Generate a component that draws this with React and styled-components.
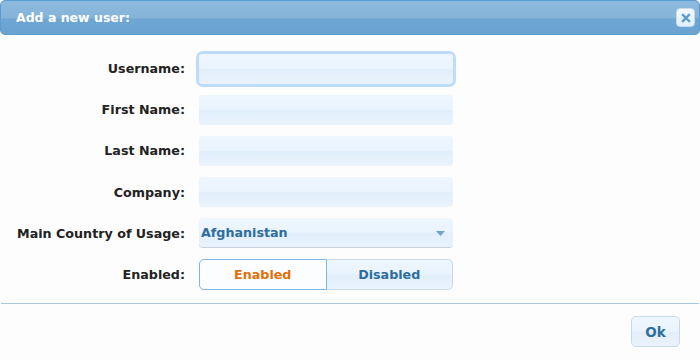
import React from 'react';
import styled, { createGlobalStyle, css } from 'styled-components';

const Global = createGlobalStyle`
  html, body {
    margin: 0;
    padding: 0;
    background: #fdfdfd;
  }
  body {
    font-family: "DejaVu Sans", Verdana, sans-serif;
  }
`;

const Dialog = styled.div`
  width: 700px;
  height: 360px;
  box-sizing: border-box;
  display: flex;
  flex-direction: column;
  background: #fdfdfd;
  overflow: hidden;
`;

const TitleBar = styled.div`
  height: 35px;
  box-sizing: border-box;
  display: flex;
  align-items: center;
  justify-content: space-between;
  padding: 0 4px 0 15px;
  border: 1px solid #5a9bd1;
  border-radius: 5px;
  background: linear-gradient(#8dbadd 0%, #85b4da 50%, #6fa6d2 55%, #6aa2d0 100%);
`;

const Title = styled.span`
  color: #fff;
  font-size: 12.5px;
  font-weight: bold;
`;

const CloseButton = styled.button`
  width: 19px;
  height: 19px;
  padding: 0;
  display: flex;
  align-items: center;
  justify-content: center;
  border: 1px solid #c5dbec;
  border-radius: 4px;
  background: linear-gradient(#f4f9fe, #dfeffc);
`;

const Form = styled.div`
  display: grid;
  grid-template-columns: 185px 254px;
  column-gap: 14px;
  row-gap: 11.2px;
  padding-top: 18.5px;
  align-items: center;
`;

const Label = styled.label`
  text-align: right;
  font-size: 12.7px;
  font-weight: bold;
  color: #222;
`;

const glass = css`
  background: linear-gradient(#eef6fe 0%, #eaf4fe 48%, #e1eefb 52%, #eaf3fd 100%);
`;

const Input = styled.input`
  height: 30px;
  box-sizing: border-box;
  border: none;
  border-radius: 4px;
  padding: 0 4px;
  outline: none;
  ${glass};
  ${p => p.$focused && css`
    box-shadow: 0 0 0 3px #bcdcfa;
  `}
`;

const Select = styled.div`
  position: relative;
  height: 30px;
  box-sizing: border-box;
  display: flex;
  align-items: center;
  padding: 0 2px;
  border-radius: 4px;
  border-bottom: 1px solid #c9cfd6;
  ${glass};
  color: #2e6e9e;
  font-size: 12.7px;
  font-weight: bold;
`;

const Arrow = styled.svg`
  position: absolute;
  right: 8px;
  top: 13px;
`;

const Segmented = styled.div`
  display: flex;
  height: 31px;
`;

const Segment = styled.button`
  flex: 1;
  box-sizing: border-box;
  font-family: inherit;
  font-size: 12.7px;
  font-weight: bold;
  cursor: pointer;
  border: 1px solid ${p => (p.$active ? '#79b7e7' : '#c5dbec')};
  color: ${p => (p.$active ? '#e17009' : '#2e6e9e')};
  background: ${p => (p.$active ? '#fbfdff' : 'linear-gradient(#eef6fe 0%, #eaf4fe 48%, #e1eefb 52%, #eaf3fd 100%)')};
  &:first-child {
    border-radius: 5px 0 0 5px;
  }
  &:last-child {
    border-radius: 0 5px 5px 0;
    border-left: none;
  }
`;

const Divider = styled.hr`
  margin: 13px 1px 0;
  border: none;
  border-top: 1px solid #a6c9e2;
`;

const Footer = styled.div`
  display: flex;
  justify-content: flex-end;
  padding: 12px 20px 0;
`;

const OkButton = styled.button`
  width: 49px;
  height: 31px;
  font-family: inherit;
  font-size: 13.5px;
  font-weight: bold;
  color: #2e6e9e;
  border: 1px solid #c5dbec;
  border-radius: 5px;
  ${glass};
`;

const fields = ['First Name:', 'Last Name:', 'Company:'];

export default function App() {
  return (
    <>
      <Global />
      <Dialog>
        <TitleBar>
          <Title>Add a new user:</Title>
          <CloseButton aria-label="close">
            <svg width="10" height="10" viewBox="0 0 10 10">
              <path d="M2 2 L8 8 M8 2 L2 8" stroke="#5b9bd1" strokeWidth="2.4" strokeLinecap="square" />
            </svg>
          </CloseButton>
        </TitleBar>
        <Form>
          <Label>Username:</Label>
          <Input $focused />
          {fields.map(f => (
            <React.Fragment key={f}>
              <Label>{f}</Label>
              <Input />
            </React.Fragment>
          ))}
          <Label>Main Country of Usage:</Label>
          <Select>
            Afghanistan
            <Arrow width="9" height="5" viewBox="0 0 9 5">
              <path d="M0 0 L9 0 L4.5 5 Z" fill="#6fa4cf" />
            </Arrow>
          </Select>
          <Label>Enabled:</Label>
          <Segmented>
            <Segment $active>Enabled</Segment>
            <Segment>Disabled</Segment>
          </Segmented>
        </Form>
        <Divider />
        <Footer>
          <OkButton>Ok</OkButton>
        </Footer>
      </Dialog>
    </>
  );
}
